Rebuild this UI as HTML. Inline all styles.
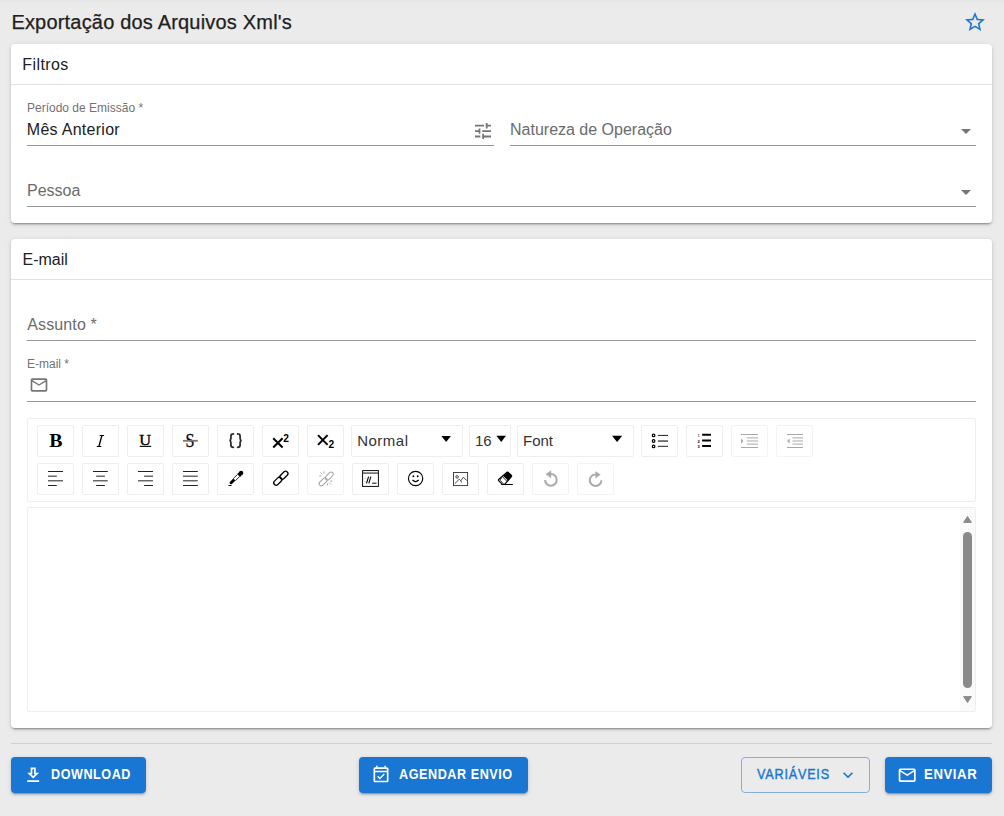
<!DOCTYPE html>
<html><head><meta charset="utf-8">
<style>
*{box-sizing:border-box;margin:0;padding:0}
html,body{width:1004px;height:816px;overflow:hidden;background:#ebebeb;font-family:"Liberation Sans",sans-serif;color:#212121;position:relative}
.a{position:absolute;white-space:nowrap}
.t16{font-size:16px;line-height:16px}
.t12{font-size:12px;line-height:12px}
.card{position:absolute;left:11px;width:981px;background:#fff;border-radius:4px;box-shadow:0 3px 1px -2px rgba(0,0,0,.2),0 2px 2px 0 rgba(0,0,0,.14),0 1px 5px 0 rgba(0,0,0,.12)}
.hr{position:absolute;left:0;right:0;height:1px;background:#e0e0e0}
.ul{position:absolute;height:1px;background:#949494}
.lbl{color:#6b6b6b}
.tb{position:absolute;border:1px solid #eee;border-radius:2px;background:#fff}
.tb.dis{border-color:#f3f3f3}
.btn{position:absolute;top:757px;height:36px;border-radius:4px;background:#1976d2;color:#fff;box-shadow:0 3px 1px -2px rgba(0,0,0,.2),0 2px 2px 0 rgba(0,0,0,.14),0 1px 5px 0 rgba(0,0,0,.12)}
.btxt{position:absolute;font-size:14px;line-height:14px;font-weight:bold;white-space:nowrap;color:#fff}
svg{position:absolute;display:block}
</style></head><body>
<div class="a" style="left:0;top:0;width:1004px;height:5px;background:linear-gradient(rgba(0,0,0,.025),rgba(0,0,0,0))"></div>
<!-- title -->
<div class="a" style="left:11.4px;top:12.3px;font-size:20px;line-height:20px;letter-spacing:0.19px;-webkit-text-stroke:0.25px #212121">Exportação dos Arquivos Xml's</div>
<svg style="left:963px;top:10px" width="24" height="24" viewBox="0 0 24 24"><path fill="#1976d2" d="M12,15.39L8.24,17.66L9.23,13.38L5.91,10.5L10.29,10.13L12,6.09L13.71,10.13L18.09,10.5L14.77,13.38L15.76,17.66M22,9.24L14.81,8.63L12,2L9.19,8.63L2,9.24L7.45,13.97L5.82,21L12,17.27L18.18,21L16.54,13.97L22,9.24Z"/></svg>

<!-- card 1 -->
<div class="card" style="top:44px;height:179px">
  <div class="a t16" style="left:11.3px;top:12.5px;letter-spacing:0.4px">Filtros</div>
  <div class="hr" style="top:40px"></div>
</div>
<div class="a t12 lbl" style="left:27px;top:102px;color:#727272">Período de Emissão *</div>
<div class="a t16" style="left:26.8px;top:121.6px;letter-spacing:0.28px">Mês Anterior</div>
<svg style="left:474.9px;top:122.8px" width="16.2" height="16.2" viewBox="3 3 18 18"><path fill="#757575" d="M3,17V19H9V17H3M3,5V7H13V5H3M13,21V19H21V17H13V15H11V21H13M7,9V11H3V13H7V15H9V9H7M21,13V11H11V13H21M15,9H17V7H21V5H17V3H15V9Z"/></svg>
<div class="ul" style="left:27px;top:145px;width:467px"></div>
<div class="a t16 lbl" style="left:510px;top:121.5px">Natureza de Operação</div>
<svg style="left:953.6px;top:118.8px" width="24" height="24" viewBox="0 0 24 24"><path fill="#757575" d="M7,10L12,15L17,10H7Z"/></svg>
<div class="ul" style="left:510px;top:145px;width:466px"></div>
<div class="a t16 lbl" style="left:27px;top:182.5px">Pessoa</div>
<svg style="left:953.6px;top:180px" width="24" height="24" viewBox="0 0 24 24"><path fill="#757575" d="M7,10L12,15L17,10H7Z"/></svg>
<div class="ul" style="left:27px;top:206px;width:949px"></div>

<!-- card 2 -->
<div class="card" style="top:239px;height:489px">
  <div class="a t16" style="left:11.5px;top:12.5px">E-mail</div>
  <div class="hr" style="top:40px"></div>
</div>
<div class="a t16 lbl" style="left:27.3px;top:316.8px;letter-spacing:0.12px">Assunto *</div>
<div class="ul" style="left:27px;top:340px;width:949px"></div>
<div class="a t12 lbl" style="left:27px;top:357.6px;color:#727272">E-mail *</div>
<svg style="left:29px;top:375px" width="20" height="20" viewBox="0 0 24 24"><path fill="#757575" d="M22 6c0-1.1-.9-2-2-2H4c-1.1 0-2 .9-2 2v12c0 1.1.9 2 2 2h16c1.1 0 2-.9 2-2V6zm-2 0l-8 5-8-5h16zm0 12H4V8l8 5 8-5v10z"/></svg>
<div class="ul" style="left:27px;top:401px;width:949px"></div>

<!-- editor -->
<div class="a" style="left:27px;top:418px;width:949px;height:84px;border:1px solid #eee;border-radius:2px;background:#fff"></div>
<div id="tools">
<div class="tb" style="left:37px;top:425px;width:37px;height:32px"></div>
<div class="tb" style="left:82px;top:425px;width:37px;height:32px"></div>
<div class="tb" style="left:127px;top:425px;width:37px;height:32px"></div>
<div class="tb" style="left:172px;top:425px;width:37px;height:32px"></div>
<div class="tb" style="left:217px;top:425px;width:37px;height:32px"></div>
<div class="tb" style="left:262px;top:425px;width:37px;height:32px"></div>
<div class="tb" style="left:307px;top:425px;width:37px;height:32px"></div>
<div class="tb" style="left:351px;top:425px;width:112px;height:32px"></div>
<div class="tb" style="left:469px;top:425px;width:42px;height:32px"></div>
<div class="tb" style="left:517px;top:425px;width:117px;height:32px"></div>
<div class="tb" style="left:641px;top:425px;width:37px;height:32px"></div>
<div class="tb" style="left:686px;top:425px;width:37px;height:32px"></div>
<div class="tb dis" style="left:731px;top:425px;width:37px;height:32px"></div>
<div class="tb dis" style="left:776px;top:425px;width:37px;height:32px"></div>
<div class="tb" style="left:37px;top:463px;width:37px;height:32px"></div>
<div class="tb" style="left:82px;top:463px;width:37px;height:32px"></div>
<div class="tb" style="left:127px;top:463px;width:37px;height:32px"></div>
<div class="tb" style="left:172px;top:463px;width:37px;height:32px"></div>
<div class="tb" style="left:217px;top:463px;width:37px;height:32px"></div>
<div class="tb" style="left:262px;top:463px;width:37px;height:32px"></div>
<div class="tb dis" style="left:307px;top:463px;width:37px;height:32px"></div>
<div class="tb" style="left:352px;top:463px;width:37px;height:32px"></div>
<div class="tb" style="left:397px;top:463px;width:37px;height:32px"></div>
<div class="tb" style="left:442px;top:463px;width:37px;height:32px"></div>
<div class="tb" style="left:487px;top:463px;width:37px;height:32px"></div>
<div class="tb dis" style="left:532px;top:463px;width:37px;height:32px"></div>
<div class="tb dis" style="left:577px;top:463px;width:37px;height:32px"></div>
<svg style="left:0;top:0" width="1004" height="816" viewBox="0 0 1004 816">
<g fill="#000">
 <text x="49.3" y="447.2" font-family="Liberation Serif" font-weight="bold" font-size="19.8">B</text>
 <path d="M99.6 435.1H104.1V436.1H99.6ZM96.8 446H101.3V447H96.8ZM101.2 435.6L102.6 435.6L99.6 446.5L98.2 446.5Z"/>
 <text x="139.3" y="444.6" font-family="Liberation Serif" font-size="14.4" stroke="#000" stroke-width="0.35" textLength="11.8" lengthAdjust="spacingAndGlyphs">U</text>
 <rect x="139.8" y="445.8" width="11.4" height="1.1"/>
 <text x="185.4" y="447" font-family="Liberation Serif" font-size="18.5" stroke="#000" stroke-width="0.3" textLength="9" lengthAdjust="spacingAndGlyphs">S</text>
</g>
<rect x="183" y="439.9" width="14.8" height="1.8" fill="#777"/>
<g fill="none" stroke="#2a2a2a" stroke-width="1.75" stroke-linecap="round">
 <path d="M233.4 433.9C231.3 433.9 230.9 434.8 230.9 436.2V438.6C230.9 439.9 230.5 440.5 229.4 440.6C230.5 440.7 230.9 441.3 230.9 442.6V445C230.9 446.4 231.3 447.3 233.4 447.3"/>
 <path d="M237.6 433.9C239.7 433.9 240.1 434.8 240.1 436.2V438.6C240.1 439.9 240.5 440.5 241.6 440.6C240.5 440.7 240.1 441.3 240.1 442.6V445C240.1 446.4 239.7 447.3 237.6 447.3"/>
</g>
<g stroke="#000" stroke-width="2">
 <path d="M273.2 438.2L282.6 447.5M282.6 438.2L273.2 447.5"/>
 <path d="M318 435.1L327.6 444.9M327.6 435.1L318 444.9"/>
</g>
<g fill="#000" font-family="Liberation Sans" font-weight="bold" font-size="10.2">
 <text x="283.2" y="441.7">2</text>
 <text x="328.5" y="447.8">2</text>
</g>
<g fill="#333" font-family="Liberation Sans" font-size="15">
 <text x="357.2" y="446" letter-spacing="0.5">Normal</text>
 <text x="475" y="446">16</text>
 <text x="523" y="446">Font</text>
</g>
<g fill="#000">
 <path d="M441.4 436H450.9L446.15 442Z"/>
 <path d="M496.4 435.8H506L501.2 441.9Z"/>
 <path d="M612 435.8H622.2L617.1 441.9Z"/>
</g>
<!-- bullet list -->
<g fill="none" stroke="#000" stroke-width="1.2">
 <circle cx="653.6" cy="435.4" r="1.3"/><circle cx="653.6" cy="441" r="1.3"/><circle cx="653.6" cy="446.4" r="1.3"/>
</g>
<g fill="#333">
 <rect x="657.9" y="434.9" width="10.1" height="1.1"/><rect x="657.9" y="440.4" width="10.1" height="1.3"/><rect x="657.9" y="445.8" width="10.1" height="1.1"/>
</g>
<!-- ordered list -->
<g fill="#000">
 <rect x="702.1" y="433.8" width="8.9" height="2" rx="0.3"/><rect x="702.1" y="439.5" width="8.9" height="2" rx="0.3"/><rect x="702.1" y="445" width="8.9" height="2" rx="0.3"/>
 <text x="697.6" y="437" font-family="Liberation Sans" font-size="4" font-weight="bold" fill="#555">1</text>
 <text x="697.6" y="442.5" font-family="Liberation Sans" font-size="4" font-weight="bold">2</text>
 <text x="697.6" y="448" font-family="Liberation Sans" font-size="4" font-weight="bold">3</text>
</g>
<!-- indent / outdent -->
<g fill="#a8a8a8">
 <rect x="741" y="434" width="17" height="1"/><rect x="746.8" y="437.4" width="11.2" height="1"/><rect x="746.8" y="440.5" width="11.2" height="1"/><rect x="746.8" y="443.6" width="11.2" height="1"/><rect x="741" y="447" width="17" height="1"/>
 <path d="M741 438.5L743.5 441L741 443.5Z"/>
 <rect x="787" y="434" width="16" height="1"/><rect x="792.5" y="437.4" width="10.5" height="1"/><rect x="792.5" y="440.5" width="10.5" height="1"/><rect x="792.5" y="443.6" width="10.5" height="1"/><rect x="787" y="447" width="16" height="1"/>
 <path d="M789.6 438.5L787.1 441L789.6 443.5Z"/>
</g>
<!-- row 2 align -->
<g fill="#222">
 <rect x="48" y="471" width="15" height="1"/><rect x="48" y="475.67" width="8.8" height="1"/><rect x="48" y="480.33" width="15" height="1"/><rect x="48" y="485" width="8.8" height="1"/>
 <rect x="93" y="471" width="14.8" height="1"/><rect x="96.2" y="475.67" width="8.7" height="1"/><rect x="93" y="480.33" width="14.8" height="1"/><rect x="96.2" y="485" width="8.7" height="1"/>
 <rect x="138" y="471" width="15" height="1"/><rect x="144.1" y="475.67" width="8.9" height="1"/><rect x="138" y="480.33" width="15" height="1"/><rect x="144.1" y="485" width="8.9" height="1"/>
 <rect x="183" y="471" width="14.8" height="1"/><rect x="183" y="475.67" width="14.8" height="1"/><rect x="183" y="480.33" width="14.8" height="1"/><rect x="183" y="485" width="14.8" height="1"/>
</g>
<!-- eyedropper -->
<g fill="#000">
 <circle cx="241.1" cy="472.9" r="2.2"/>
 <path d="M241.93 475.09L240.09 476.93L237.27 474.11L239.11 472.27Z"/>
 <path d="M229.54 482.14L233.34 478.44L235.46 480.56L231.66 484.26L230 484Z"/>
</g>
<path d="M233.34 478.44L237.6 474.4M235.46 480.56L239.7 476.5" stroke="#000" stroke-width="0.85" fill="none"/>
<ellipse cx="230" cy="485.5" rx="1.9" ry="0.5" fill="#000"/>
<!-- link -->
<g fill="none" stroke="#000" stroke-width="1.3">
 <rect x="279.2" y="472.85" width="9.4" height="4.8" rx="2.4" transform="rotate(-45 283.9 475.25)"/>
 <rect x="273.1" y="478.8" width="9.4" height="4.8" rx="2.4" transform="rotate(-45 277.8 481.2)"/>
</g>
<!-- unlink -->
<g fill="none" stroke="#a0a0a0" stroke-width="1">
 <rect x="324.6" y="473.9" width="9.4" height="4.3" rx="2.15" transform="rotate(-45 329.3 476.05)"/>
 <rect x="318.4" y="479.7" width="9.4" height="4.3" rx="2.15" transform="rotate(-45 323.1 481.85)"/>
</g>
<g fill="none" stroke="#a0a0a0" stroke-width="0.9">
 <path d="M320.6 472.6L322.3 474.3M319.2 475.8H321.4M323.9 471.4V473.6M330.8 484.3L329.1 482.6M332.2 481.1H330M327.5 485.5V483.3"/>
</g>
<!-- code view -->
<g fill="none" stroke="#000" stroke-width="0.95">
 <rect x="362.6" y="470.6" width="15.8" height="15.8"/>
</g>
<rect x="363" y="472.4" width="15" height="1.4" fill="#555"/>
<path d="M368.6 476.7L366.5 483.3M370.9 476.7L368.8 483.3" stroke="#000" stroke-width="1.1" fill="none"/>
<circle cx="365.1" cy="478.4" r="0.5" fill="#999"/><circle cx="365.1" cy="481.6" r="0.5" fill="#999"/>
<rect x="372.1" y="482.6" width="4.4" height="1.2" fill="#333"/>
<!-- emoji -->
<g fill="none" stroke="#000" stroke-width="1.15">
 <circle cx="415.6" cy="478.5" r="7.15"/>
 <path d="M412.5 480Q415.6 483.2 418.7 480"/>
</g>
<circle cx="413.4" cy="476.3" r="0.95"/><circle cx="417.7" cy="476.3" r="0.95"/>
<!-- image -->
<g fill="none" stroke="#333" stroke-width="0.9">
 <rect x="453.5" y="472.5" width="14.1" height="13.1"/>
 <path d="M454.8 483.6L459.3 479.2L460.8 480.8L463.4 477.2L466.8 480.6M460.8 480.8L461.8 482.6"/>
 <circle cx="457.1" cy="476.9" r="1.3"/>
</g>
<!-- eraser -->
<g>
 <path d="M507 472.3Q507.6 471.8 508.2 472.3L511.4 475.5Q511.9 476.1 511.4 476.7L504.6 484.3H502.3L498.6 480.6Q498.2 480.1 498.6 479.5Z" fill="#fff" stroke="#000" stroke-width="1.2" stroke-linejoin="round"/>
 <path d="M507 472.3Q507.6 471.8 508.2 472.3L511.4 475.5Q511.9 476.1 511.4 476.7L507.9 480.6L503.2 475.9Z" fill="#000"/>
 <path d="M502.6 476.8L507 481.4M501.5 478.2L499.9 480.1L503.3 483.6" fill="none" stroke="#000" stroke-width="0.8"/>
 <rect x="501.2" y="484" width="11.7" height="1" fill="#000"/>
</g>
<!-- undo / redo -->
<g fill="none" stroke="#aaa" stroke-width="2">
 <path d="M545.1 479.9A5.8 5.8 0 1 0 550.9 474.1"/>
 <path d="M601.4 480.2A5.8 5.8 0 1 1 595.6 474.4"/>
</g>
<g fill="#aaa">
 <path d="M551.2 470.3V478.3L545.6 474.2Z"/>
 <path d="M595.3 471.2L600.7 474.6L595.3 478.6Z"/>
</g>
</svg>
</div>
<div class="a" style="left:27px;top:507px;width:949px;height:205px;border:1px solid #eee;border-radius:2px;background:#fff"></div>
<div class="a" style="left:960px;top:508px;width:15px;height:203px;background:#fafafa"></div>
<svg style="left:955px;top:505px" width="25" height="210" viewBox="955 505 25 210">
<g fill="#8a8a8a" stroke="#8a8a8a" stroke-width="1" stroke-linejoin="round">
<path d="M963.6 522.4H971.4L967.5 516.5Z"/>
<path d="M963.6 696.6H971.4L967.5 702.5Z"/>
</g>
<rect x="963" y="532" width="9" height="156" rx="4.5" fill="#8a8a8a"/>
</svg>

<!-- bottom -->
<div class="a" style="left:11px;top:743px;width:981px;height:1px;background:#d0d0d0"></div>
<div class="btn" style="left:11px;width:135px"></div>
<svg style="left:22.9px;top:764.8px" width="20.4" height="20.4" viewBox="0 0 24 24"><path fill="#fff" d="M13,5V11H14.17L12,13.17L9.83,11H11V5H13M15,3H9V9H5L12,16L19,9H15V3M19,18H5V20H19V18Z"/></svg>
<div class="btxt" style="left:50.5px;top:767.4px;letter-spacing:0.6px;transform:scaleX(0.9);transform-origin:0 0">DOWNLOAD</div>
<div class="btn" style="left:359px;width:169px"></div>
<svg style="left:371.2px;top:764.3px" width="20" height="20" viewBox="0 0 24 24"><path fill="#fff" d="M19 4H18V2H16V4H8V2H6V4H5C3.89 4 3 4.9 3 6V20C3 21.1 3.89 22 5 22H19C20.1 22 21 21.1 21 20V6C21 4.9 20.1 4 19 4M19 20H5V10H19V20M5 8V6H19V8H5M10.56 18.46L16.5 12.53L15.43 11.47L10.56 16.34L8.45 14.23L7.39 15.29L10.56 18.46Z"/></svg>
<div class="btxt" style="left:398.8px;top:767.4px;letter-spacing:0.6px;transform:scaleX(0.902);transform-origin:0 0">AGENDAR ENVIO</div>
<div class="a" style="left:741px;top:757px;width:129px;height:36px;border:1px solid #82b0de;border-radius:4px"></div>
<div class="btxt" style="left:757.3px;top:767.4px;font-weight:normal;color:#1976d2;-webkit-text-stroke:0.4px #1976d2;letter-spacing:0.9px;transform:scaleX(0.9);transform-origin:0 0">VARIÁVEIS</div>
<svg style="left:838.1px;top:765.15px" width="20" height="20" viewBox="0 0 24 24"><path fill="#1976d2" d="M7.41,8.58L12,13.17L16.59,8.58L18,10L12,16L6,10L7.41,8.58Z"/></svg>
<div class="btn" style="left:885px;width:107px"></div>
<svg style="left:896.7px;top:764.8px" width="20.4" height="20.4" viewBox="0 0 24 24"><path fill="#fff" d="M22 6C22 4.9 21.1 4 20 4H4C2.9 4 2 4.9 2 6V18C2 19.1 2.9 20 4 20H20C21.1 20 22 19.1 22 18V6M20 6L12 11L4 6H20M20 18H4V8L12 13L20 8V18Z"/></svg>
<div class="btxt" style="left:923.6px;top:767.4px;letter-spacing:0.6px;transform:scaleX(0.944);transform-origin:0 0">ENVIAR</div>
</body></html>
